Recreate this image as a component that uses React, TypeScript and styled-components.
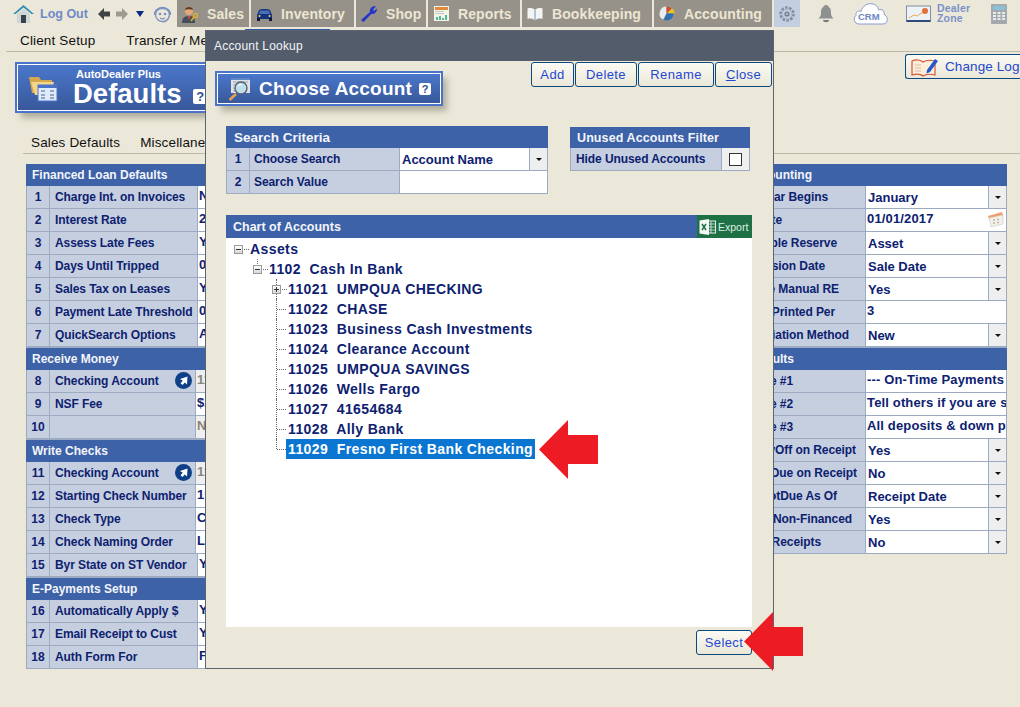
import React from 'react'
import styled, { createGlobalStyle } from 'styled-components'

const NAVY = '#0d2170'
const GRID = '#9dabc2'
const CELL = '#c5cfdf'
const PAPER = '#ebe8d9'
const BAR = '#3d62a8'

const GlobalStyle = createGlobalStyle`
  html, body {
    margin: 0;
    padding: 0;
    background: ${PAPER};
    font-family: "Liberation Sans", Arial, sans-serif;
  }
`

/* ---------- icons ---------- */

const HomeIcon = () => (
  <svg width="23" height="20" viewBox="0 0 23 20">
    <path d="M1 10 L11.5 1 L22 10 L19.5 10 L11.5 3.5 L3.5 10 Z" fill="#2f8fb5" />
    <path d="M5 10 L11.5 5 L18 10 V19 H5 Z" fill="#cfd6d6" />
    <rect x="9" y="11" width="5" height="8" fill="#3a4148" />
  </svg>
)

const ArrowIcon = ({ color, flip }: { color: string; flip?: boolean }) => (
  <svg width="14" height="14" viewBox="0 0 14 14" style={flip ? { transform: 'scaleX(-1)' } : undefined}>
    <path d="M7 1 L1 7 L7 13 V9.5 H13 V4.5 H7 Z" fill={color} />
  </svg>
)

const FaceIcon = () => (
  <svg width="21" height="20" viewBox="0 0 21 20" fill="none" stroke="#7d93c4" strokeWidth="1.3">
    <circle cx="10.5" cy="10.5" r="7" />
    <path d="M3 11 C2 2 19 2 18 11" strokeWidth="2.2" />
    <circle cx="8" cy="10" r="0.7" fill="#7d93c4" />
    <circle cx="13" cy="10" r="0.7" fill="#7d93c4" />
    <path d="M8 14 C9.5 15 11.5 15 13 14" />
    <path d="M17 12 C17 16 14 18 11 18" strokeWidth="1" />
  </svg>
)

const SalesIcon = () => (
  <svg width="18" height="20" viewBox="0 0 18 20">
    <path d="M1 19 C1 13 4 12 8 12 C12 12 14 13 14 19 Z" fill="#43505c" />
    <path d="M6.5 12 L8 16 L9.5 12 Z" fill="#d94a2a" />
    <circle cx="8" cy="7" r="4" fill="#e4a77c" />
    <path d="M4 6 C4 2 12 2 12 6 C10 5 6 5 4 6 Z" fill="#5b3a1e" />
    <circle cx="14.5" cy="11.5" r="2" fill="none" stroke="#e0b030" strokeWidth="1.3" />
    <path d="M13 13 L10 17" stroke="#e0b030" strokeWidth="1.5" />
  </svg>
)

const CarIcon = () => (
  <svg width="17" height="14" viewBox="0 0 17 14">
    <path d="M1 8 L3 3 C3.5 1.5 13.5 1.5 14 3 L16 8 V12 H1 Z" fill="#14337f" />
    <path d="M4 3.5 H13 L14 7 H3 Z" fill="#4a6fb8" />
    <rect x="1" y="11" width="3" height="3" fill="#111a33" />
    <rect x="13" y="11" width="3" height="3" fill="#111a33" />
    <circle cx="3.5" cy="9" r="1" fill="#ffd94a" />
    <circle cx="13.5" cy="9" r="1" fill="#ffd94a" />
  </svg>
)

const WrenchIcon = () => (
  <svg width="18" height="18" viewBox="0 0 18 18">
    <path d="M1 15 L10 7 C9 3.5 12.5 0.5 16 1.5 L13 4.5 L14 6 L16.8 3.5 C17.5 7 14 9.8 11.5 8.8 L3.5 17 Z" fill="#2437c8" />
  </svg>
)

const ReportsIcon = () => (
  <svg width="15" height="15" viewBox="0 0 15 15">
    <rect width="15" height="15" fill="#f3f3ea" />
    <rect x="1" y="1" width="13" height="3" fill="#e28a3c" />
    <rect x="1" y="5" width="9" height="1" fill="#c9c9c0" />
    <rect x="1" y="7" width="9" height="1" fill="#c9c9c0" />
    <rect x="2" y="11" width="2" height="3" fill="#55b59a" />
    <rect x="5" y="10" width="2" height="4" fill="#55b59a" />
    <rect x="8" y="12" width="2" height="2" fill="#55b59a" />
    <rect x="11" y="9" width="2" height="5" fill="#55b59a" />
  </svg>
)

const BookIcon = () => (
  <svg width="16" height="14" viewBox="0 0 16 14">
    <path d="M0.5 1.5 C3 0.5 6 1 8 3 C10 1 13 0.5 15.5 1.5 V12 C13 11 10 11.5 8 13.5 C6 11.5 3 11 0.5 12 Z" fill="#f4f5f2" />
    <path d="M8 3 V13.5" stroke="#7fa3c9" strokeWidth="1.2" />
  </svg>
)

const PieIcon = () => (
  <svg width="17" height="15" viewBox="0 0 17 15">
    <path d="M7.5 7.5 L7.5 0.5 A7 7 0 0 0 4 13.5 Z" fill="#e9edf2" />
    <path d="M7.5 7.5 L7.5 0.5 A7 7 0 0 1 12.5 2.5 Z" fill="#d8482b" />
    <path d="M8.5 7 L13 2.5 A6 6 0 0 1 15.5 7.5 Z" fill="#f0c419" />
    <path d="M7.5 7.5 H14.5 A7 7 0 0 1 5 14 Z" fill="#2b6fb5" />
  </svg>
)

const GearIcon = () => (
  <svg width="18" height="18" viewBox="0 0 18 18">
    <circle cx="9" cy="9" r="6.5" fill="none" stroke="#7f8ba3" strokeWidth="2.4" strokeDasharray="2.5 1.5" />
    <circle cx="9" cy="9" r="5" fill="none" stroke="#9aa4b8" strokeWidth="0.8" />
    <circle cx="9" cy="9" r="2.6" fill="#77808f" />
    <circle cx="9" cy="9" r="1" fill="#c3cfe0" />
  </svg>
)

const BellIcon = () => (
  <svg width="16" height="19" viewBox="0 0 16 19">
    <path d="M8 1 C10 1 10.5 2 10.5 3 C13 4 13 7 13 10 C13 12 14.5 13 15.5 14.5 H0.5 C1.5 13 3 12 3 10 C3 7 3 4 5.5 3 C5.5 2 6 1 8 1 Z" fill="#8e9092" />
    <path d="M5 16 H11 C11 19 5 19 5 16 Z" fill="#77797b" />
  </svg>
)

const CloudIcon = () => (
  <svg width="36" height="23" viewBox="0 0 36 23">
    <path
      d="M6 22 C1 22 0 16 3 13.5 C2 10 6 8 8 9.5 C9 4 15 0.5 20 2 C24 3 25.5 6 25.5 8 C29 6.5 32 9 31 12.5 C35 13.5 36 22 30 22 Z"
      fill="#fff"
      stroke="#7d93c9"
      strokeWidth="0.9"
    />
  </svg>
)

const DealerIcon = () => (
  <svg width="25" height="18" viewBox="0 0 25 18">
    <rect x="0.5" y="1" width="24" height="15" fill="#eef1f6" stroke="#7f8fa8" />
    <rect x="0.5" y="15" width="24" height="2" fill="#2c4a7c" />
    <path d="M3 13 L8 10 L11 11 L17 7" fill="none" stroke="#e8a33c" strokeWidth="0.9" />
    <circle cx="19" cy="6" r="3" fill="#e2703a" />
  </svg>
)

const CalcIcon = () => (
  <svg width="16" height="20" viewBox="0 0 16 20">
    <rect width="16" height="20" rx="1" fill="#a4a9ad" />
    <rect x="2" y="2" width="12" height="4" fill="#8cc0d8" />
    {[8, 11, 14].map(y =>
      [2, 6.5, 11].map(x => <rect key={`${x}-${y}`} x={x} y={y} width="3" height="2" fill="#e8eaec" />)
    )}
  </svg>
)

const ChangeLogIcon = () => (
  <svg width="28" height="20" viewBox="0 0 28 20">
    <path d="M1 4 C5 2 10 3 12 5 C15 3 20 3 24 4 V18 C20 17 15 17 12 19 C10 17 5 17 1 18 Z" fill="#fbeedb" stroke="#d8573a" strokeWidth="1.2" />
    <path d="M4 8 H10 M4 11 H10 M4 14 H10" stroke="#e5b9a0" />
    <path d="M16 13 L24 2 L27 4 L19 15 L15.5 16.5 Z" fill="#2257c7" />
  </svg>
)

const FolderIcon = () => (
  <svg width="30" height="30" viewBox="0 0 30 30">
    <path d="M1 4 H11 L13 7 H24 V20 H4 Z" fill="#d5a84c" />
    <path d="M3 9 H26 L23 22 H7 Z" fill="#f4d68a" />
    <rect x="10" y="12" width="19" height="16" fill="#dfeafa" stroke="#4a74c9" />
    <rect x="10" y="12" width="19" height="3" fill="#4a74c9" />
    <path d="M13 18 H17 M22 18 H26 M13 22 H17 M22 22 H26 M13 25 H17 M22 25 H26" stroke="#7b8fb5" strokeWidth="1.5" />
  </svg>
)

const LookupIcon = () => (
  <svg width="24" height="24" viewBox="0 0 24 24">
    <rect x="3" y="1" width="19" height="15" fill="#dfe3e4" />
    <path d="M3 2 H22" stroke="#5f86c8" strokeWidth="2" />
    <path d="M5 5 H20 M5 8 H9 M5 11 H8 M5 14 H8" stroke="#93a1b8" />
    <path d="M8 17 L1.5 23" stroke="#e8a04e" strokeWidth="2.6" />
    <circle cx="13" cy="11" r="6" fill="#bfe0ea" stroke="#55606e" strokeWidth="1.4" />
    <path d="M10 9 C11 7.5 13 7.5 14 8" stroke="#fff" fill="none" />
  </svg>
)

const ExcelIcon = () => (
  <svg width="17" height="16" viewBox="0 0 17 16">
    <rect x="7.5" y="2" width="9" height="12" fill="none" stroke="#dfeee5" />
    <path d="M8 5 H16 M8 8 H16 M8 11 H16 M12 2 V14" stroke="#dfeee5" strokeWidth="0.8" />
    <path d="M0.5 1.5 L10 0 V16 L0.5 14.5 Z" fill="#f3f7f4" />
    <path d="M3 5 L7 11 M7 5 L3 11" stroke="#1e7145" strokeWidth="1.5" />
  </svg>
)

const CalendarIcon = () => (
  <svg width="17" height="17" viewBox="0 0 17 17">
    <path d="M1 5 L15 1 L16 4 L2 8 Z" fill="#f0a070" />
    <path d="M2 7 L16 4 L16 13 L4 16 Z" fill="#f3f1e8" stroke="#c9c6bc" strokeWidth="0.6" />
    <path d="M6 9 H8 M10 8.5 H12 M6 12 H8 M10 11.5 H12" stroke="#b9b6ac" strokeWidth="1.4" />
  </svg>
)

const LinkIcon = () => (
  <svg width="17" height="17" viewBox="0 0 17 17">
    <circle cx="8.5" cy="8.5" r="8.5" fill="#0f3f86" />
    <path d="M5 7 L12.5 4.5 L12 12.5 L9.8 10.5 L7.5 13 L5.5 11.2 L7.8 8.8 Z" fill="#fff" />
  </svg>
)

const RedArrow = () => (
  <svg width="59" height="59" viewBox="0 0 59 59">
    <path d="M0 29.5 L29 0 V15 H59 V44 H29 V59 Z" fill="#ed1c24" />
  </svg>
)

/* ---------- data ---------- */

type Value = { text: string; kind?: 'select' | 'date' | 'muted' }
type Row = { no: number; label: string; value: Value; trim?: number; narrow?: boolean }

const leftTable: { title: string; rows: Row[] }[] = [
  {
    title: 'Financed Loan Defaults',
    rows: [
      { no: 1, label: 'Charge Int. on Invoices', value: { text: 'No' } },
      { no: 2, label: 'Interest Rate', value: { text: '24.00 %' } },
      { no: 3, label: 'Assess Late Fees', value: { text: 'Yes' } },
      { no: 4, label: 'Days Until Tripped', value: { text: '0' } },
      { no: 5, label: 'Sales Tax on Leases', value: { text: 'Yes' } },
      { no: 6, label: 'Payment Late Threshold', value: { text: '0.00' } },
      { no: 7, label: 'QuickSearch Options', value: { text: 'Account' } }
    ]
  },
  {
    title: 'Receive Money',
    rows: [
      { no: 8, label: 'Checking Account', narrow: true, value: { text: '11021', kind: 'muted' } },
      { no: 9, label: 'NSF Fee', narrow: true, value: { text: '$25.00' } },
      { no: 10, label: '', narrow: true, value: { text: 'No', kind: 'muted' } }
    ]
  },
  {
    title: 'Write Checks',
    rows: [
      { no: 11, label: 'Checking Account', narrow: true, value: { text: '11021', kind: 'muted' } },
      { no: 12, label: 'Starting Check Number', narrow: true, value: { text: '1001' } },
      { no: 13, label: 'Check Type', narrow: true, value: { text: 'Check' } },
      { no: 14, label: 'Check Naming Order', narrow: true, value: { text: 'Last' } },
      { no: 15, label: 'Byr State on ST Vendor', value: { text: 'Yes' } }
    ]
  },
  {
    title: 'E-Payments Setup',
    rows: [
      { no: 16, label: 'Automatically Apply $', value: { text: 'Yes' } },
      { no: 17, label: 'Email Receipt to Cust', value: { text: 'Yes' } },
      { no: 18, label: 'Auth Form For', value: { text: 'Financed' } }
    ]
  }
]

// trim is the gap from the end of the text to the right edge, the start of these labels sits under the dialog
const rightTable: { title: string; trim: number; rows: Row[] }[] = [
  {
    title: 'Accounting',
    trim: 195,
    rows: [
      { no: 1, label: 'Fiscal Year Begins', trim: 37, value: { text: 'January', kind: 'select' } },
      { no: 2, label: 'Start Date', trim: 83, value: { text: '01/01/2017', kind: 'date' } },
      { no: 3, label: 'Receivable Reserve', trim: 28, value: { text: 'Asset', kind: 'select' } },
      { no: 4, label: 'Commission Date', trim: 40, value: { text: 'Sale Date', kind: 'select' } },
      { no: 5, label: 'Use Manual RE', trim: 26, value: { text: 'Yes', kind: 'select' } },
      { no: 6, label: 'Copies Printed Per', trim: 30, value: { text: '3' } },
      { no: 7, label: 'Depreciation Method', trim: 16, value: { text: 'New', kind: 'select' } }
    ]
  },
  {
    title: 'Results',
    trim: 213,
    rows: [
      { no: 8, label: 'Line #1', trim: 72, value: { text: '--- On-Time Payments Appreciated' } },
      { no: 9, label: 'Line #2', trim: 72, value: { text: 'Tell others if you are satisfied' } },
      { no: 10, label: 'Line #3', trim: 72, value: { text: 'All deposits & down payments' } },
      { no: 11, label: 'PayOff on Receipt', trim: 9, value: { text: 'Yes', kind: 'select' } },
      { no: 12, label: 'NotDue on Receipt', trim: 8, value: { text: 'No', kind: 'select' } },
      { no: 13, label: 'NotDue As Of', trim: 28, value: { text: 'Receipt Date', kind: 'select' } },
      { no: 14, label: 'Show Non-Financed', trim: 13, value: { text: 'Yes', kind: 'select' } },
      { no: 15, label: 'Print Receipts', trim: 44, value: { text: 'No', kind: 'select' } }
    ]
  }
]

const navTabs = [
  { name: 'Sales', width: 72, icon: <SalesIcon /> },
  { name: 'Inventory', width: 103, icon: <CarIcon /> },
  { name: 'Shop', width: 70, icon: <WrenchIcon /> },
  { name: 'Reports', width: 92, icon: <ReportsIcon /> },
  { name: 'Bookkeeping', width: 130, icon: <BookIcon /> },
  { name: 'Accounting', width: 118, icon: <PieIcon /> }
]

const accounts = [
  '11022  CHASE',
  '11023  Business Cash Investments',
  '11024  Clearance Account',
  '11025  UMPQUA SAVINGS',
  '11026  Wells Fargo',
  '11027  41654684',
  '11028  Ally Bank'
]

/* ---------- small parts ---------- */

const ValueCell = ({ value }: { value: Value }) => (
  <ValueBox $muted={value.kind === 'muted'}>
    <ValueText $plain={value.kind !== 'select'}>{value.text}</ValueText>
    {value.kind === 'select' && <Drop />}
    {value.kind === 'date' && (
      <CalendarSlot>
        <CalendarIcon />
      </CalendarSlot>
    )}
  </ValueBox>
)

const Expander = ({ open }: { open: boolean }) => (
  <ExpanderBox>
    <ExpanderBar />
    {!open && <ExpanderStem />}
  </ExpanderBox>
)

const App = () => {
  return (
    <Page>
      <GlobalStyle />

      <TopBar>
        <HomeSlot>
          <HomeIcon />
        </HomeSlot>
        <LogOut>Log Out</LogOut>
        <ArrowGroup>
          <ArrowIcon color="#3f4346" />
          <ArrowIcon color="#9b9b90" flip />
          <TinyDown />
        </ArrowGroup>
        <FaceSlot>
          <FaceIcon />
        </FaceSlot>
        {navTabs.map(tab => (
          <NavTab key={tab.name} $width={tab.width}>
            <NavTabIcon>{tab.icon}</NavTabIcon>
            {tab.name}
          </NavTab>
        ))}
        <GearTab>
          <GearIcon />
        </GearTab>
        <BellSlot>
          <BellIcon />
        </BellSlot>
        <CrmSlot>
          <CloudIcon />
          <CrmText>CRM</CrmText>
        </CrmSlot>
        <DealerSlot>
          <DealerIcon />
          <DealerText>
            Dealer
            <br />
            Zone
          </DealerText>
        </DealerSlot>
        <CalcSlot>
          <CalcIcon />
        </CalcSlot>
      </TopBar>

      <SubNav>
        <SubNavItem>Client Setup</SubNavItem>
        <SubNavItem>Transfer / Merge</SubNavItem>
        <SubNavActive />
      </SubNav>

      <TitleRow>
        <DefaultsBanner>
          <BannerInner>
            <FolderSlot>
              <FolderIcon />
            </FolderSlot>
            <BannerTexts>
              <BannerSmall>AutoDealer Plus</BannerSmall>
              <BannerBig>
                Defaults <Help $big>?</Help>
              </BannerBig>
            </BannerTexts>
          </BannerInner>
        </DefaultsBanner>
        <ChangeLog>
          <ChangeLogIcon />
          <ChangeLogText>Change Log</ChangeLogText>
        </ChangeLog>
      </TitleRow>

      <SubTabs>
        <SubTab>Sales Defaults</SubTab>
        <SubTab>Miscellaneous</SubTab>
      </SubTabs>

      <Tables>
        <LeftColumn>
          {leftTable.map(section => (
            <Section key={section.title}>
              <BarTitle>{section.title}</BarTitle>
              {section.rows.map(row => (
                <GridRow key={row.no}>
                  <NoCell>{row.no}</NoCell>
                  <LabelCell $width={row.narrow ? 146 : 148}>
                    {row.label}
                    {row.value.text === '11021' && (
                      <LinkSlot>
                        <LinkIcon />
                      </LinkSlot>
                    )}
                  </LabelCell>
                  <ValueCell value={row.value} />
                </GridRow>
              ))}
            </Section>
          ))}
        </LeftColumn>

        <RightColumn>
          {rightTable.map(section => (
            <Section key={section.title}>
              <TrimmedBarTitle $trim={section.trim}>{section.title}</TrimmedBarTitle>
              {section.rows.map(row => (
                <GridRow key={row.no}>
                  <NoCell>{row.no}</NoCell>
                  <TrimmedLabel $trim={row.trim ?? 0}>{row.label}</TrimmedLabel>
                  <ValueCell value={row.value} />
                </GridRow>
              ))}
            </Section>
          ))}
        </RightColumn>
      </Tables>

      <Dialog>
        <DialogHead>Account Lookup</DialogHead>
        <DialogBody>
          <DialogTop>
            <ChooseBanner>
              <BannerInner>
                <LookupSlot>
                  <LookupIcon />
                </LookupSlot>
                <ChooseTitle>Choose Account</ChooseTitle>
                <Help>?</Help>
              </BannerInner>
            </ChooseBanner>
            <Buttons>
              <ActionButton>Add</ActionButton>
              <ActionButton $width={62}>Delete</ActionButton>
              <ActionButton $width={76}>Rename</ActionButton>
              <ActionButton $width={57}>
                <u>C</u>lose
              </ActionButton>
            </Buttons>
          </DialogTop>

          <Filters>
            <SearchTable>
              <SearchTitle>Search Criteria</SearchTitle>
              <GridRow>
                <NoCell>1</NoCell>
                <SearchLabel $width={150}>Choose Search</SearchLabel>
                <ValueCell value={{ text: 'Account Name', kind: 'select' }} />
              </GridRow>
              <GridRow>
                <NoCell>2</NoCell>
                <SearchLabel $width={150}>Search Value</SearchLabel>
                <ValueCell value={{ text: '' }} />
              </GridRow>
            </SearchTable>
            <UnusedTable>
              <UnusedTitle>Unused Accounts Filter</UnusedTitle>
              <GridRow>
                <LabelCell $width={151}>Hide Unused Accounts</LabelCell>
                <CheckCell>
                  <CheckBox />
                </CheckCell>
              </GridRow>
            </UnusedTable>
          </Filters>

          <Chart>
            <ChartBar>
              Chart of Accounts
              <ExportButton>
                <ExcelIcon />
                <span>Export</span>
              </ExportButton>
            </ChartBar>
            <Tree>
              <TreeRow $level={0}>
                <Marker>
                  <Expander open />
                  <Dash />
                </Marker>
                <TreeLabel>Assets</TreeLabel>
              </TreeRow>
              <TreeRow $level={1} $line="stub">
                <Marker>
                  <Expander open />
                  <Dash />
                </Marker>
                <TreeLabel>{'1102  Cash In Bank'}</TreeLabel>
              </TreeRow>
              <TreeRow $level={2} $line="full">
                <Marker>
                  <Expander open={false} />
                  <Dash />
                </Marker>
                <TreeLabel>{'11021  UMPQUA CHECKING'}</TreeLabel>
              </TreeRow>
              {accounts.map(account => (
                <TreeRow key={account} $level={2} $line="full">
                  <Marker>
                    <LeafDash />
                  </Marker>
                  <TreeLabel>{account}</TreeLabel>
                </TreeRow>
              ))}
              <TreeRow $level={2} $line="half">
                <Marker>
                  <LeafDash />
                </Marker>
                <TreeLabel $selected>{'11029  Fresno First Bank Checking'}</TreeLabel>
              </TreeRow>
            </Tree>
          </Chart>

          <SelectRow>
            <ActionButton $width={56}>Select</ActionButton>
          </SelectRow>
        </DialogBody>
      </Dialog>

      <TreeArrow>
        <RedArrow />
      </TreeArrow>
      <SelectArrow>
        <RedArrow />
      </SelectArrow>
    </Page>
  )
}

/* ---------- page ---------- */

const Page = styled.div`
  position: relative;
  width: 1020px;
  height: 707px;
  overflow: hidden;
  background: ${PAPER};
  color: ${NAVY};
`

const TopBar = styled.div`
  display: flex;
  align-items: center;
  height: 27px;
`
const HomeSlot = styled.div`
  display: flex;
  margin-left: 12px;
  width: 28px;
`
const LogOut = styled.div`
  width: 57px;
  font-size: 12.5px;
  font-weight: bold;
  color: #7089c6;
`
const ArrowGroup = styled.div`
  display: flex;
  align-items: center;
  gap: 4px;
  width: 55px;
`
const TinyDown = styled.span`
  width: 0;
  height: 0;
  margin-left: 3px;
  border-left: 4px solid transparent;
  border-right: 4px solid transparent;
  border-top: 6px solid #0b2a86;
`
const FaceSlot = styled.div`
  display: flex;
  width: 25px;
`
const NavTab = styled.div<{ $width: number }>`
  display: flex;
  align-items: center;
  flex: none;
  width: ${props => props.$width}px;
  height: 27px;
  margin-right: 2px;
  padding-left: 4px;
  box-sizing: border-box;
  background: #96928a;
  color: #ece6d2;
  font-size: 14px;
  font-weight: bold;
  letter-spacing: 0.1px;
`
const NavTabIcon = styled.span`
  display: flex;
  justify-content: center;
  width: 18px;
  margin-right: 8px;
`
const GearTab = styled.div`
  display: flex;
  align-items: center;
  justify-content: center;
  width: 26px;
  height: 27px;
  background: #c3cfe0;
`
const BellSlot = styled.div`
  display: flex;
  margin-left: 18px;
  width: 35px;
`
const CrmSlot = styled.div`
  position: relative;
  display: flex;
  width: 53px;
`
const CrmText = styled.span`
  position: absolute;
  left: 5px;
  top: 9px;
  font-size: 9.5px;
  font-weight: bold;
  color: #6d86c4;
`
const DealerSlot = styled.div`
  display: flex;
  align-items: center;
  gap: 6px;
  width: 86px;
`
const DealerText = styled.div`
  font-size: 10.5px;
  line-height: 9.5px;
  font-weight: bold;
  color: #7b90c9;
  letter-spacing: 0.2px;
`
const CalcSlot = styled.div`
  display: flex;
  margin-left: -1px;
`

const SubNav = styled.div`
  display: flex;
  align-items: flex-start;
  height: 24px;
  margin-left: 6px;
  padding-left: 14px;
  border-bottom: 1px solid #bdbaa8;
`
const SubNavItem = styled.div`
  margin-top: 6px;
  margin-right: 31px;
  font-size: 13.5px;
  line-height: 15px;
  letter-spacing: 0.15px;
  color: #111;
`
const SubNavActive = styled.div`
  width: 85px;
  margin-top: 2px;
  margin-left: -14px;
  height: 21px;
  border-top: 2px solid #2f5a9e;
`

const TitleRow = styled.div`
  display: flex;
  align-items: flex-start;
  height: 78px;
`
const Banner = styled.div`
  box-sizing: border-box;
  padding: 1px;
  border: 1px solid #4a74c9;
  background: #ffffff;
  box-shadow: 5px 6px 6px rgba(90, 88, 70, 0.4);
  outline: 1px solid #4a74c9;
`
const DefaultsBanner = styled(Banner)`
  width: 230px;
  height: 49px;
  margin-top: 11px;
  margin-left: 16px;
`
const BannerInner = styled.div`
  display: flex;
  align-items: center;
  height: 100%;
  background: linear-gradient(#4a77cb, #38589a);
  color: #fff;
`
const FolderSlot = styled.div`
  display: flex;
  margin-left: 10px;
  margin-right: 15px;
`
const BannerTexts = styled.div`
  display: flex;
  flex-direction: column;
`
const BannerSmall = styled.div`
  font-size: 11px;
  line-height: 12px;
  font-weight: bold;
  margin-left: 3px;
`
const BannerBig = styled.div`
  font-size: 27.5px;
  line-height: 28px;
  font-weight: bold;
`
const Help = styled.span<{ $big?: boolean }>`
  display: inline-flex;
  align-items: center;
  justify-content: center;
  box-sizing: border-box;
  width: ${props => (props.$big ? 14 : 12)}px;
  height: ${props => (props.$big ? 15 : 12)}px;
  margin-left: ${props => (props.$big ? 4 : 7)}px;
  border-radius: 2px;
  background: #fff;
  color: #2f4f8f;
  font-size: ${props => (props.$big ? 13 : 11)}px;
  line-height: 12px;
  font-weight: bold;
  vertical-align: 2px;
`
const ChangeLog = styled.div`
  display: flex;
  align-items: center;
  flex: none;
  gap: 6px;
  box-sizing: border-box;
  width: 115px;
  height: 25px;
  margin-top: 2px;
  margin-left: auto;
  padding-left: 5px;
  border: 1px solid #0b4a80;
  border-right: none;
  border-radius: 3px 0 0 3px;
  background: linear-gradient(#fbfaf3, #ebe8d9);
  color: #1f48d0;
  font-size: 13.5px;
  letter-spacing: 0.1px;
`
const ChangeLogText = styled.span`
  white-space: nowrap;
`

const SubTabs = styled.div`
  display: flex;
  gap: 20px;
  height: 23px;
  margin-left: 23px;
  padding-left: 8px;
  border-bottom: 1px solid #bdbaa8;
`
const SubTab = styled.div`
  margin-top: 5px;
  font-size: 13.5px;
  line-height: 15px;
  letter-spacing: 0.15px;
  color: #111;
`

const Tables = styled.div`
  display: flex;
  justify-content: space-between;
  margin-top: 10px;
  padding: 0 13px 0 26px;
`
const LeftColumn = styled.div`
  width: 304px;
`
const RightColumn = styled.div`
  width: 347px;
`
const Section = styled.section`
  & + & {
    border-top: 1px solid ${GRID};
  }
`

/* ---------- grid tables ---------- */

const BarTitle = styled.div`
  display: flex;
  align-items: center;
  box-sizing: border-box;
  height: 22px;
  padding-left: 6px;
  background: ${BAR};
  color: #f3f5fb;
  font-size: 12px;
  font-weight: bold;
`
const TrimmedBarTitle = styled(BarTitle)<{ $trim: number }>`
  justify-content: flex-end;
  padding-right: ${props => props.$trim}px;
`
const SearchTitle = styled(BarTitle)`
  padding-left: 8px;
  font-size: 13.5px;
`
const UnusedTitle = styled(BarTitle)`
  height: 21px;
  padding-left: 7px;
  font-size: 12.5px;
  letter-spacing: 0.1px;
`
const GridRow = styled.div`
  display: flex;
  box-sizing: border-box;
  height: 23px;
  border-left: 1px solid ${GRID};
  border-right: 1px solid ${GRID};
  border-bottom: 1px solid ${GRID};
`
const NoCell = styled.div`
  display: flex;
  align-items: center;
  justify-content: center;
  flex: none;
  width: 22px;
  background: ${CELL};
  border-right: 1px solid ${GRID};
  font-size: 12px;
  font-weight: bold;
`
const LabelCell = styled.div<{ $width: number }>`
  position: relative;
  display: flex;
  align-items: center;
  flex: none;
  box-sizing: border-box;
  width: ${props => props.$width}px;
  padding-left: 5px;
  padding-bottom: 1px;
  background: ${CELL};
  border-right: 1px solid ${GRID};
  font-size: 12px;
  font-weight: bold;
  letter-spacing: -0.08px;
  white-space: nowrap;
`
const SearchLabel = styled(LabelCell)`
  padding-left: 4px;
`
const TrimmedLabel = styled(LabelCell).attrs({ $width: 182 })<{ $trim: number }>`
  justify-content: flex-end;
  padding-left: 0;
  padding-right: ${props => props.$trim}px;
`
const LinkSlot = styled.span`
  position: absolute;
  right: 3px;
  top: 2px;
  display: flex;
`
const ValueBox = styled.div<{ $muted?: boolean }>`
  position: relative;
  display: flex;
  align-items: center;
  flex: 1;
  min-width: 0;
  background: ${props => (props.$muted ? '#efefef' : '#fff')};
  color: ${props => (props.$muted ? '#8a8578' : NAVY)};
  font-size: 13px;
  font-weight: bold;
  white-space: nowrap;
  overflow: hidden;
`
const ValueText = styled.span<{ $plain: boolean }>`
  flex: 1;
  padding-left: ${props => (props.$plain ? 1 : 2)}px;
  padding-bottom: ${props => (props.$plain ? 3 : 0)}px;
  letter-spacing: ${props => (props.$plain ? 0.15 : 0)}px;
  min-width: 0;
  overflow: hidden;
`
const Drop = styled.span`
  display: flex;
  align-items: center;
  justify-content: center;
  flex: none;
  width: 17px;
  align-self: stretch;
  background: #eeeeee;
  border-left: 1px solid ${GRID};
  &::after {
    content: '';
    border-left: 3px solid transparent;
    border-right: 3px solid transparent;
    border-top: 3px solid #111;
  }
`
const CalendarSlot = styled.span`
  position: absolute;
  right: 2px;
  top: 2px;
  display: flex;
`

/* ---------- dialog ---------- */

const Dialog = styled.div`
  position: absolute;
  left: 205px;
  top: 30px;
  width: 569px;
  height: 639px;
  box-sizing: border-box;
  border: 1px solid #5a6472;
  background: ${PAPER};
`
const DialogHead = styled.div`
  display: flex;
  align-items: center;
  height: 30px;
  padding-left: 8px;
  background: #525c6b;
  color: #f2f4f7;
  font-size: 12px;
  letter-spacing: 0.2px;
`
const DialogBody = styled.div`
  padding-right: 1px;
`
const DialogTop = styled.div`
  display: flex;
  justify-content: space-between;
  align-items: flex-start;
  height: 65px;
  padding-left: 10px;
`
const ChooseBanner = styled(Banner)`
  width: 226px;
  height: 33px;
  margin-top: 11px;
`
const LookupSlot = styled.div`
  display: flex;
  margin-left: 10px;
  margin-right: 7px;
`
const ChooseTitle = styled.div`
  font-size: 19px;
  font-weight: bold;
  letter-spacing: 0.2px;
`
const Buttons = styled.div`
  display: flex;
  gap: 1px;
  margin-top: 1px;
`
const ActionButton = styled.div<{ $width?: number }>`
  display: flex;
  align-items: center;
  justify-content: center;
  box-sizing: border-box;
  width: ${props => props.$width ?? 43}px;
  height: 25px;
  border: 1px solid #0b4a80;
  border-radius: 3px;
  background: linear-gradient(#fbfaf3, #ebe8d9);
  color: #1f48d0;
  font-size: 13px;
  letter-spacing: 0.4px;
`
const Filters = styled.div`
  display: flex;
  align-items: flex-start;
  height: 89px;
  padding-left: 20px;
`
const SearchTable = styled.div`
  width: 322px;
`
const UnusedTable = styled.div`
  width: 180px;
  margin-top: 1px;
  margin-left: 22px;
`
const CheckCell = styled.div`
  display: flex;
  align-items: center;
  justify-content: center;
  flex: 1;
  background: #efefef;
`
const CheckBox = styled.span`
  box-sizing: border-box;
  width: 13px;
  height: 13px;
  border: 1px solid #333;
  background: #fff;
`
const Chart = styled.div`
  width: 526px;
  height: 412px;
  margin-left: 20px;
  display: flex;
  flex-direction: column;
`
const ChartBar = styled(BarTitle)`
  justify-content: space-between;
  height: 23px;
  padding-left: 7px;
  flex: none;
  font-size: 12.5px;
`
const ExportButton = styled.div`
  display: flex;
  align-items: center;
  gap: 2px;
  box-sizing: border-box;
  width: 55px;
  height: 23px;
  padding-left: 2px;
  background: #1e7145;
  color: #dfeee5;
  font-size: 10.5px;
  font-weight: normal;
`
const Tree = styled.div`
  flex: 1;
  padding-top: 1px;
  background: #fff;
`
const lineHeights = { stub: '5px', full: '20px', half: '10px' }
const TreeRow = styled.div<{ $level: number; $line?: 'stub' | 'full' | 'half' }>`
  position: relative;
  display: flex;
  align-items: center;
  height: 20px;
  padding-left: ${props => 8 + props.$level * 19}px;
  &::before {
    content: ${props => (props.$line ? "''" : 'none')};
    position: absolute;
    left: ${props => 8 + props.$level * 19 + 4}px;
    top: 0;
    height: ${props => (props.$line ? lineHeights[props.$line] : 0)};
    border-left: 1px dotted #666;
  }
`
const Marker = styled.div`
  position: relative;
  display: flex;
  align-items: center;
  flex: none;
  width: 16px;
  height: 20px;
`
const ExpanderBox = styled.span`
  position: relative;
  z-index: 1;
  flex: none;
  box-sizing: border-box;
  width: 9px;
  height: 9px;
  border: 1px solid #9a9a9a;
  background: linear-gradient(#fff, #d8d8d8);
`
const ExpanderBar = styled.span`
  position: absolute;
  left: 1px;
  top: 3px;
  width: 5px;
  height: 1px;
  background: #333;
`
const ExpanderStem = styled.span`
  position: absolute;
  left: 3px;
  top: 1px;
  width: 1px;
  height: 5px;
  background: #333;
`
const Dash = styled.span`
  width: 5px;
  margin-left: 1px;
  border-top: 1px dotted #666;
`
const LeafDash = styled.span`
  width: 9px;
  margin-left: 5px;
  border-top: 1px dotted #666;
`
const TreeLabel = styled.span<{ $selected?: boolean }>`
  height: 20px;
  margin-left: -2px;
  padding: 0 2px;
  background: ${props => (props.$selected ? '#0a76d2' : 'transparent')};
  color: ${props => (props.$selected ? '#fff' : NAVY)};
  font-size: 14px;
  line-height: 20px;
  font-weight: bold;
  white-space: pre;
  letter-spacing: 0.4px;
`
const SelectRow = styled.div`
  display: flex;
  justify-content: flex-end;
  width: 526px;
  margin-left: 20px;
  margin-top: 3px;
`

const TreeArrow = styled.div`
  position: absolute;
  left: 539px;
  top: 420px;
  display: flex;
`
const SelectArrow = styled.div`
  position: absolute;
  left: 744px;
  top: 612px;
  display: flex;
`

export default App
